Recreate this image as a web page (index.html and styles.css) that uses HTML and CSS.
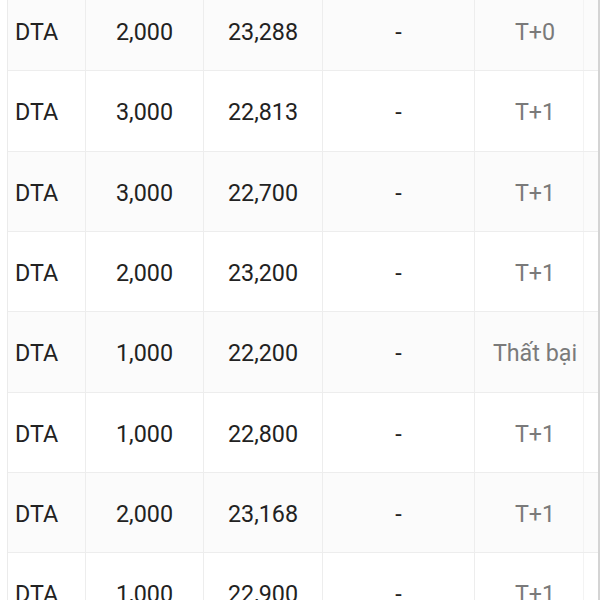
FILE: index.html
```html
<!DOCTYPE html>
<html lang="vi">
<head>
<meta charset="utf-8">
<link rel="stylesheet" href="styles.css">
</head>
<body>
<div class="wrap">
  <div class="table">
    <div class="row odd"><div class="c c1">DTA</div><div class="c c2">2,000</div><div class="c c3">23,288</div><div class="c c4">-</div><div class="c c5">T+0</div><div class="c c6"></div></div>
    <div class="row"><div class="c c1">DTA</div><div class="c c2">3,000</div><div class="c c3">22,813</div><div class="c c4">-</div><div class="c c5">T+1</div><div class="c c6"></div></div>
    <div class="row odd"><div class="c c1">DTA</div><div class="c c2">3,000</div><div class="c c3">22,700</div><div class="c c4">-</div><div class="c c5">T+1</div><div class="c c6"></div></div>
    <div class="row"><div class="c c1">DTA</div><div class="c c2">2,000</div><div class="c c3">23,200</div><div class="c c4">-</div><div class="c c5">T+1</div><div class="c c6"></div></div>
    <div class="row odd"><div class="c c1">DTA</div><div class="c c2">1,000</div><div class="c c3">22,200</div><div class="c c4">-</div><div class="c c5">Thất bại</div><div class="c c6"></div></div>
    <div class="row"><div class="c c1">DTA</div><div class="c c2">1,000</div><div class="c c3">22,800</div><div class="c c4">-</div><div class="c c5">T+1</div><div class="c c6"></div></div>
    <div class="row odd"><div class="c c1">DTA</div><div class="c c2">2,000</div><div class="c c3">23,168</div><div class="c c4">-</div><div class="c c5">T+1</div><div class="c c6"></div></div>
    <div class="row"><div class="c c1">DTA</div><div class="c c2">1,000</div><div class="c c3">22,900</div><div class="c c4">-</div><div class="c c5">T+1</div><div class="c c6"></div></div>
  </div>
</div>
</body>
</html>
```
FILE: styles.css
```css
html, body {
  margin: 0;
  padding: 0;
  background: #ffffff;
  overflow: hidden;
}
body {
  font-family: Roboto, "Noto Sans", sans-serif;
  color: #222222;
  width: 600px;
  height: 600px;
}
.wrap {
  margin-top: -9px;
  margin-left: 7px;
  width: 590px;
  border-right: 2px solid #d4d4d4;
  border-left: 1px solid #ebebeb;
}
.table {
  display: flex;
  flex-direction: column;
}
.row {
  display: grid;
  grid-template-columns: 78px 118px 119px 152px 109px 1fr;
  height: 80.33px;
  box-sizing: border-box;
  border-bottom: 1px solid #ededed;
}
.row.odd {
  background: #fbfbfb;
}
.c {
  display: flex;
  align-items: center;
  justify-content: center;
  font-size: 23.3px;
  padding-top: 3px;
  border-right: 1px solid #ededed;
  box-sizing: border-box;
  white-space: nowrap;
}
.c1 {
  justify-content: flex-start;
  padding-left: 7px;
}
.c5 {
  color: #7a7a7a;
  padding-left: 12px;
  border-right: 1px solid #f3f3f3;
}
.c6 {
  border-right: none;
}
```
